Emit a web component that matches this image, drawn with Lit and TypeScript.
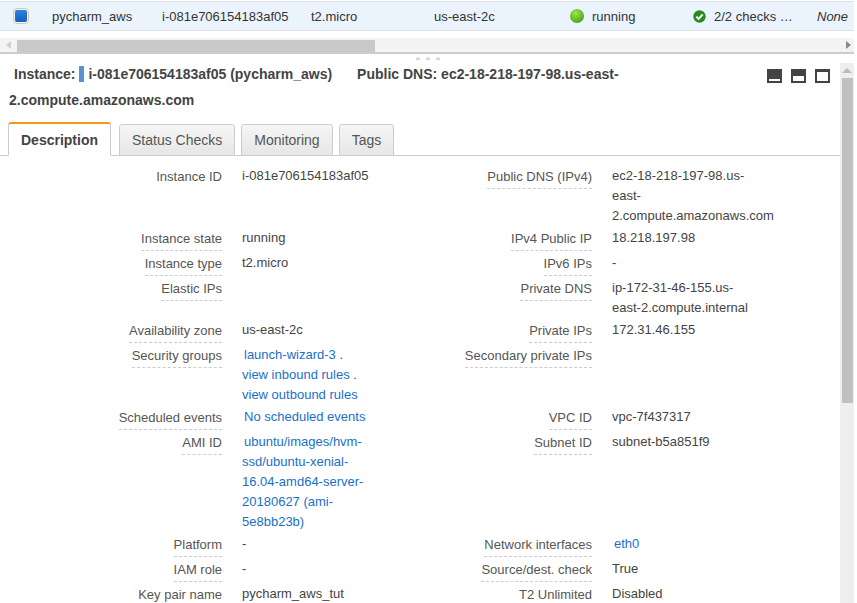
import { LitElement, html, css, svg } from "lit";
import { customElement } from "lit/decorators.js";

type Row = { l: string; v?: any; link?: boolean; plain?: boolean };

const link = (t: string) => html`<a class="link">${t}</a>`;

const rows: [Row, Row][] = [
  [
    { l: "Instance ID", v: "i-081e706154183af05", plain: true },
    { l: "Public DNS (IPv4)", v: "ec2-18-218-197-98.us-east-2.compute.amazonaws.com" },
  ],
  [{ l: "Instance state", v: "running" }, { l: "IPv4 Public IP", v: "18.218.197.98", plain: true }],
  [{ l: "Instance type", v: "t2.micro" }, { l: "IPv6 IPs", v: "-", plain: true }],
  [{ l: "Elastic IPs", v: "" }, { l: "Private DNS", v: "ip-172-31-46-155.us-east-2.compute.internal", plain: true }],
  [{ l: "Availability zone", v: "us-east-2c" }, { l: "Private IPs", v: "172.31.46.155" }],
  [
    {
      l: "Security groups",
      link: true,
      v: html`<a class="link first">launch-wizard-3</a><span class="sep"> . </span>${link("view inbound rules")}<span class="sep"> . </span>${link("view outbound rules")}`,
    },
    { l: "Secondary private IPs", v: "" },
  ],
  [
    { l: "Scheduled events", link: true, v: html`<a class="link first">No scheduled events</a>` },
    { l: "VPC ID", v: "vpc-7f437317" },
  ],
  [
    {
      l: "AMI ID",
      link: true,
      v: html`<a class="link first">ubuntu/images/hvm-ssd/ubuntu-xenial-16.04-amd64-server-20180627 (ami-5e8bb23b)</a>`,
    },
    { l: "Subnet ID", v: "subnet-b5a851f9" },
  ],
  [{ l: "Platform", v: "-" }, { l: "Network interfaces", link: true, v: html`<a class="link first">eth0</a>` }],
  [{ l: "IAM role", v: "-" }, { l: "Source/dest. check", v: "True" }],
  [{ l: "Key pair name", v: "pycharm_aws_tut" }, { l: "T2 Unlimited", v: "Disabled" }],
];

const dockIcon = (top: number, h: number) => svg`<svg class="dock" width="15" height="14" viewBox="0 0 15 14">
  <rect width="15" height="14" fill="#444"/><rect x="2" y="${top}" width="11" height="${h}" fill="#fff"/></svg>`;

@customElement("app-root")
export class AppRoot extends LitElement {
  static styles = css`
    :host {
      display: block;
      width: 857px;
      height: 603px;
      overflow: hidden;
      background: #fff;
      font-family: "Liberation Sans", Arial, sans-serif;
      font-size: 13px;
      color: #444;
    }
    .page { width: 854px; height: 603px; display: flex; flex-direction: column; overflow: hidden; }
    .toprow {
      height: 28px;
      margin-top: 1px;
      flex: none;
      background: #ebf3fd;
      border-top: 1px solid #dde1e6;
      border-bottom: 1px solid #dde1e6;
      box-sizing: border-box;
      height: 30px;
      display: flex;
      align-items: center;
      color: #333;
    }
    .check {
      width: 16px; height: 16px; margin-left: 13px; flex: none; box-sizing: border-box;
      border: 1px solid #c9c9c9; border-radius: 4px; background: #f4f4f4; padding: 1px;
    }
    .check i { display: block; width: 12px; height: 12px; border-radius: 2px; background: linear-gradient(#2f7fd8, #1461be); }
    .cell { flex: none; white-space: nowrap; box-sizing: border-box; }
    .c1 { width: 110px; margin-left: 23px; }
    .c2 { width: 149px; }
    .c3 { width: 123px; }
    .c4 { width: 136px; }
    .c5 { width: 123px; display: flex; align-items: center; gap: 8px; }
    .c6 { width: 124px; display: flex; align-items: center; gap: 8px; }
    .c7 { font-style: italic; }
    .hscroll {
      flex: none; margin-top: 7px; height: 16px; background: #f4f4f4; box-sizing: border-box;
      border-bottom: 2px solid #ccc;
      display: flex; align-items: stretch; position: relative;
    }
    .hscroll .thumb { width: 358px; margin: 2px 0 0 17px; background: #c9c9c9; height: 12px; }
    .arr { position: absolute; top: 3px; width: 0; height: 0; border-top: 4px solid transparent; border-bottom: 4px solid transparent; }
    .arr.l { left: 6px; border-right: 5px solid #d0d0d0; }
    .arr.r { right: 3px; border-left: 5px solid #888; }
    .handle { flex: none; height: 6px; margin-top: 3px; display: flex; justify-content: center; gap: 6px; padding-left: 1px; }
    .handle i { width: 4px; height: 3px; border: 1px solid #ccc; border-radius: 2px 2px 0 0; box-sizing: border-box; }
    .body { flex: 1; display: flex; min-height: 0; margin-top: 0; }
    .main { flex: 1; min-width: 0; overflow: hidden; position: relative; }
    .head {
      font-weight: 700; font-size: 14px; color: #444; line-height: 26px; padding: 0 0 0 9px; width: 620px; height: 53px;
      margin-top: -2px;
    }
    .head .i1 { margin-left: 5px; }
    .head .flag { display: inline-block; width: 5px; height: 16px; background: #5a94d0; margin: 0 4px 0 4px; vertical-align: -3px; }
    .head .dns { margin-left: 25px; }
    .docks { position: absolute; top: 6px; right: 10px; display: flex; gap: 9px; }
    .dock { display: block; }
    .tabs {
      display: flex; gap: 6px; margin-top: 8px; padding-left: 8px; height: 34px; box-sizing: border-box;
      border-bottom: 1px solid #ccc; align-items: flex-end;
    }
    .tab {
      height: 32px; box-sizing: border-box; margin-bottom: -1px; padding: 0 12px;
      border: 1px solid #ccc; border-bottom: 1px solid #ccc; border-radius: 3px 3px 0 0;
      background: linear-gradient(#f6f6f6, #e6e6e6); color: #555; font-size: 14px; line-height: 30px;
    }
    .tab.on {
      height: 34px; background: #fff; border-top: 2px solid #f49a17; border-bottom: 1px solid #fff;
      font-weight: 700; color: #444; padding: 0 12px; line-height: 33px; margin-right: 2px;
    }
    .grid {
      display: grid; grid-template-columns: 222px 150px 220px 164px; column-gap: 0;
      padding-top: 10px; line-height: 20px; font-size: 13px;
    }
    .lab { justify-self: end; padding-top: 1px; align-self: start; color: #555; margin-bottom: 2px; }
    .lab span { display: block; border-bottom: 1px dashed #ccc; line-height: 20px; padding-bottom: 1px; }
    .lab.plain span { border-bottom-color: transparent; }
    .val { margin-left: 20px; padding-bottom: 2px; color: #444; overflow-wrap: normal; }
    .link { color: #1a6fc9; text-decoration: none; }
    .first { margin-left: 2px; }
    .sep { color: #444; }
    .vbar { width: 14px; flex: none; background: #eee; margin-top: 0; position: relative; }
    .vbar .up { position: absolute; top: 5px; left: 2px; width: 0; height: 0; border-left: 5px solid transparent; border-right: 5px solid transparent; border-bottom: 5px solid #bbb; }
    .vbar .th { position: absolute; top: 15px; left: 2px; width: 11px; height: 325px; background: #c0c0c0; }
    .vwrap { width: 14px; flex: none; display: flex; flex-direction: column; }
  `;

  render() {
    return html`<div class="page">
      <div class="toprow">
        <div class="check"><i></i></div>
        <div class="cell c1">pycharm_aws</div>
        <div class="cell c2">i-081e706154183af05</div>
        <div class="cell c3">t2.micro</div>
        <div class="cell c4">us-east-2c</div>
        <div class="cell c5">
          <svg width="14" height="14" viewBox="0 0 14 14"><defs><radialGradient id="g" cx=".4" cy=".3" r=".8"><stop offset="0" stop-color="#9de64a"/><stop offset="1" stop-color="#3f9c12"/></radialGradient></defs><circle cx="7" cy="7" r="7" fill="url(#g)"/></svg>
          running
        </div>
        <div class="cell c6">
          <svg width="13" height="13" viewBox="0 0 13 13"><circle cx="6.5" cy="6.5" r="6.2" fill="#2b8a1e"/><path d="M3.3 6.6l2.3 2.3 4-4.4" fill="none" stroke="#fff" stroke-width="2"/></svg>
          2/2 checks …
        </div>
        <div class="cell c7">None</div>
      </div>
      <div class="hscroll"><span class="arr l"></span><div class="thumb"></div><span class="arr r"></span></div>
      <div class="handle"><i></i><i></i><i></i></div>
      <div class="body">
        <div class="main">
          <div class="head"><span class="i1">Instance:</span><span class="flag"></span>i-081e706154183af05 (pycharm_aws)<span class="dns">Public DNS: ec2-18-218-197-98.us-east-2.compute.amazonaws.com</span></div>
          <div class="docks">${dockIcon(10, 2)}${dockIcon(7, 5)}${dockIcon(3, 9)}</div>
          <div class="tabs">
            <div class="tab on">Description</div>
            <div class="tab">Status Checks</div>
            <div class="tab">Monitoring</div>
            <div class="tab">Tags</div>
          </div>
          <div class="grid">
            ${rows.map(
              (r) => html`${r.map(
                (c) => html`<div class="lab ${c.plain && c.l === "Instance ID" ? "plain" : ""}"><span>${c.l}</span></div><div class="val">${c.v}</div>`,
              )}`,
            )}
          </div>
        </div>
        <div class="vwrap"><div class="vbar" style="height:600px"><div class="up"></div><div class="th"></div></div></div>
      </div>
    </div>`;
  }
}
